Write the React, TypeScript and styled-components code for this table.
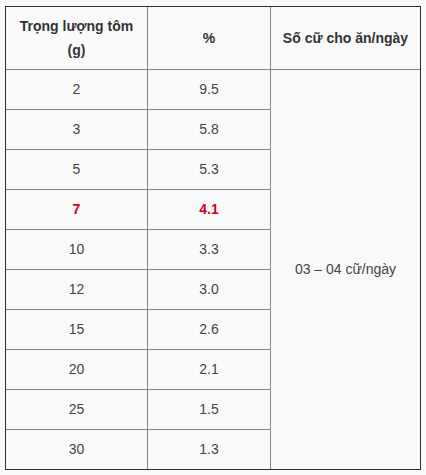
import { createGlobalStyle, styled } from "styled-components";

interface Row {
    weight: string;
    percent: string;
    highlight?: boolean;
}

const rows: Row[] = [
    { weight: "2", percent: "9.5" },
    { weight: "3", percent: "5.8" },
    { weight: "5", percent: "5.3" },
    { weight: "7", percent: "4.1", highlight: true },
    { weight: "10", percent: "3.3" },
    { weight: "12", percent: "3.0" },
    { weight: "15", percent: "2.6" },
    { weight: "20", percent: "2.1" },
    { weight: "25", percent: "1.5" },
    { weight: "30", percent: "1.3" },
];

function App() {
    return (
        <>
            <GlobalStyle />
            <PageStyle>
                <TableStyle>
                    <colgroup>
                        <col style={{ width: 141 }} />
                        <col style={{ width: 123 }} />
                        <col style={{ width: 150 }} />
                    </colgroup>
                    <thead>
                        <tr>
                            <HeadCell>Trọng lượng tôm (g)</HeadCell>
                            <HeadCell>%</HeadCell>
                            <HeadCell>Số cữ cho ăn/ngày</HeadCell>
                        </tr>
                    </thead>
                    <tbody>
                        {rows.map((row, index) => (
                            <tr key={row.weight}>
                                <Cell $highlight={row.highlight}>{row.weight}</Cell>
                                <Cell $highlight={row.highlight}>{row.percent}</Cell>
                                {index === 0 && (
                                    <Cell rowSpan={rows.length}>03 – 04 cữ/ngày</Cell>
                                )}
                            </tr>
                        ))}
                    </tbody>
                </TableStyle>
            </PageStyle>
        </>
    );
}

const GlobalStyle = createGlobalStyle`
    html, body {
        margin: 0;
        background: #f9f9f9;
    }
`;

const PageStyle = styled.div`
    padding: 6px 5px;
    font-family: "Liberation Sans", Arial, sans-serif;
    font-size: 14px;
    line-height: 23px;
`;

const TableStyle = styled.table`
    width: 415px;
    table-layout: fixed;
    border-collapse: separate;
    border-spacing: 0;
    border: 1px solid #2e2e2e;
    background: #f9f9f9;
`;

const HeadCell = styled.th`
    height: 48px;
    padding: 7px 5px;
    line-height: 24px;
    text-align: center;
    vertical-align: middle;
    font-weight: bold;
    color: #333;
    border-left: 1px solid #858585;

    &:first-child {
        border-left: none;
    }
`;

interface CellProps {
    $highlight?: boolean;
}

const Cell = styled.td<CellProps>`
    height: 23px;
    padding: 8px 10px;
    text-align: center;
    vertical-align: middle;
    color: ${(props) => (props.$highlight ? "#d0011b" : "#444")};
    font-weight: ${(props) => (props.$highlight ? "bold" : "normal")};
    border-top: 1px solid #858585;
    border-left: 1px solid #858585;

    &:first-child {
        border-left: none;
    }
`;

export default App;
